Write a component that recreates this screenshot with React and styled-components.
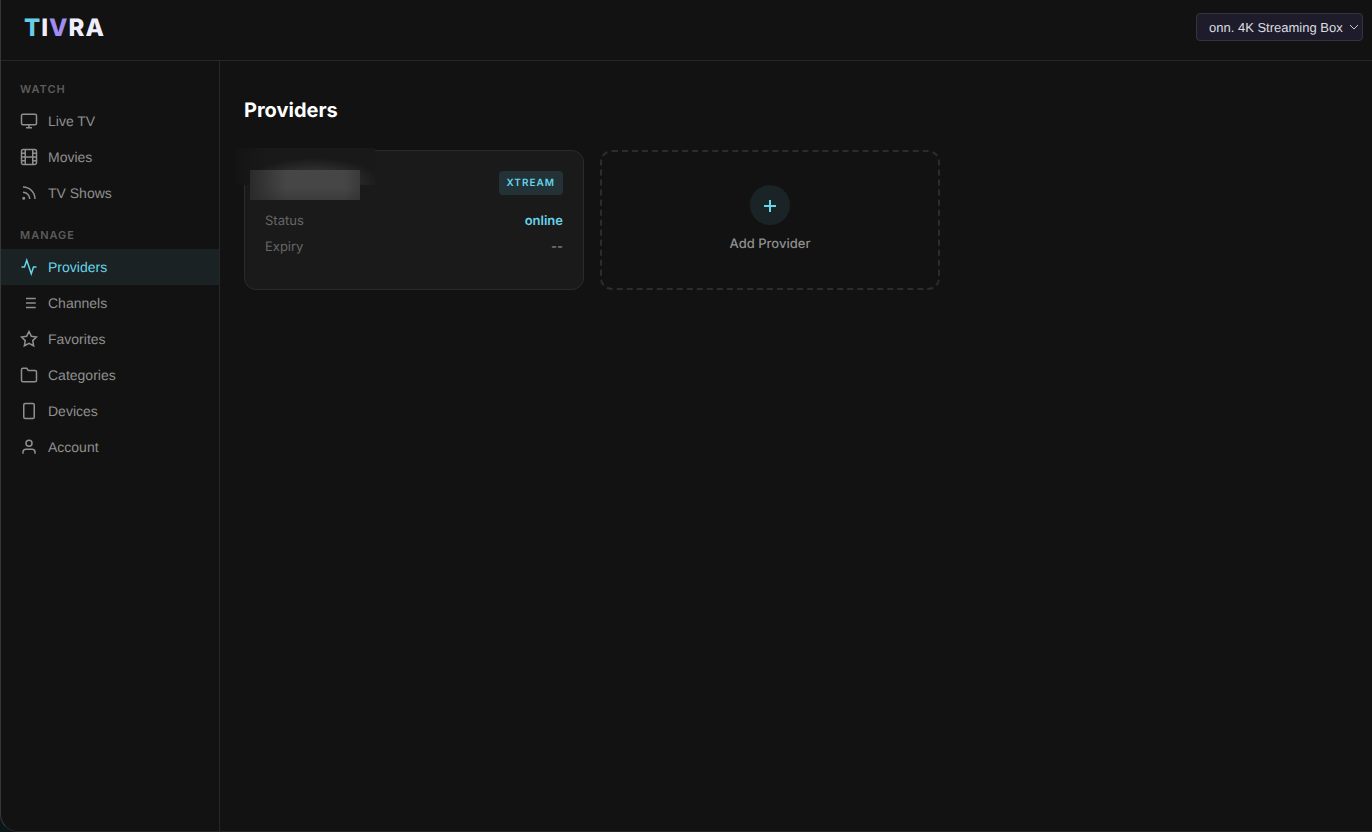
import React from "react";
import styled, { createGlobalStyle } from "styled-components";

const GlobalStyle = createGlobalStyle`
  * {
    box-sizing: border-box;
  }

  body {
    margin: 0;
    background: #0b1618;
    color: #999;
    font-family: "Liberation Sans", Arial, sans-serif;
    font-size: 14px;
    text-rendering: geometricPrecision;
  }
`;

const ICONS = {
  live: (
    <>
      <rect x="2" y="3" width="20" height="14" rx="2" />
      <path d="M8 21h8M12 17v4" />
    </>
  ),
  movies: (
    <>
      <rect x="2" y="2" width="20" height="20" rx="2.2" />
      <path d="M7 2v20M17 2v20M2 12h20M2 7h5M2 17h5M17 17h5M17 7h5" />
    </>
  ),
  shows: (
    <>
      <path d="M4 11a9 9 0 0 1 9 9M4 4a16 16 0 0 1 16 16" />
      <circle cx="5" cy="19" r="1" />
    </>
  ),
  providers: <path d="M22 12h-4l-3 9L9 3l-3 9H2" />,
  channels: <path d="M8 6h13M8 12h13M8 18h13" />,
  favorites: (
    <path d="M12 2l3.09 6.26L22 9.27l-5 4.87 1.18 6.88L12 17.77l-6.18 3.25L7 14.14 2 9.27l6.91-1.01z" />
  ),
  categories: (
    <path d="M22 19a2 2 0 0 1-2 2H4a2 2 0 0 1-2-2V5a2 2 0 0 1 2-2h5l2 3h9a2 2 0 0 1 2 2z" />
  ),
  devices: <rect x="5" y="2" width="14" height="20" rx="2" />,
  account: (
    <>
      <path d="M20 21v-2a4 4 0 0 0-4-4H8a4 4 0 0 0-4 4v2" />
      <circle cx="12" cy="7" r="4" />
    </>
  ),
};

const SECTIONS = [
  {
    title: "Watch",
    items: [
      { icon: "live", label: "Live TV" },
      { icon: "movies", label: "Movies" },
      { icon: "shows", label: "TV Shows" },
    ],
  },
  {
    title: "Manage",
    items: [
      { icon: "providers", label: "Providers", active: true },
      { icon: "channels", label: "Channels" },
      { icon: "favorites", label: "Favorites" },
      { icon: "categories", label: "Categories" },
      { icon: "devices", label: "Devices" },
      { icon: "account", label: "Account" },
    ],
  },
];

function Icon({ name }) {
  return (
    <NavIcon viewBox="0 0 24 24" aria-hidden="true">
      {ICONS[name]}
    </NavIcon>
  );
}

function Header() {
  return (
    <TopBar>
      <Logo href="#home">
        <Letter $color="#67cfe8">T</Letter>I<Letter $color="#a18cf0">V</Letter>RA
      </Logo>
      <DevicePicker>
        <DeviceSelect aria-label="Device" defaultValue="onn">
          <option value="onn">onn. 4K Streaming Box</option>
        </DeviceSelect>
        <Chevron viewBox="0 0 10 6" aria-hidden="true">
          <path d="M1 1l4 4 4-4" />
        </Chevron>
      </DevicePicker>
    </TopBar>
  );
}

function Sidebar() {
  return (
    <Side>
      {SECTIONS.map((section) => (
        <Section key={section.title}>
          <SectionTitle>{section.title}</SectionTitle>
          {section.items.map((item) => (
            <NavLink
              key={item.label}
              href={`#${item.icon}`}
              $active={item.active}
              aria-current={item.active ? "page" : undefined}
            >
              <Icon name={item.icon} />
              {item.label}
            </NavLink>
          ))}
        </Section>
      ))}
    </Side>
  );
}

function ProviderCard() {
  return (
    <Card>
      <HiddenHalo />
      <HiddenName />
      <CardHead>
        <Badge>XTREAM</Badge>
      </CardHead>
      <Details>
        <Row>
          <dt>Status</dt>
          <Value $online>online</Value>
        </Row>
        <Row>
          <dt>Expiry</dt>
          <Value>--</Value>
        </Row>
      </Details>
    </Card>
  );
}

export default function App() {
  return (
    <Shell>
      <GlobalStyle />
      <Header />
      <Body>
        <Sidebar />
        <Main>
          <Title>Providers</Title>
          <Grid>
            <ProviderCard />
            <AddCard type="button">
              <PlusCircle>
                <svg viewBox="0 0 12 12" width="12" height="12" aria-hidden="true">
                  <path d="M6 0v12M0 6h12" stroke="currentColor" strokeWidth="2" />
                </svg>
              </PlusCircle>
              Add Provider
            </AddCard>
          </Grid>
        </Main>
      </Body>
    </Shell>
  );
}

const Shell = styled.div`
  display: flex;
  flex-direction: column;
  min-height: 100vh;
  background: #121212;
  border-left: 1px solid #343838;
  border-bottom: 1px solid #242626;
  border-bottom-left-radius: 18px;
`;

const TopBar = styled.header`
  display: flex;
  align-items: flex-start;
  justify-content: space-between;
  height: 61px;
  padding: 13px 9px 0 23px;
  border-bottom: 1px solid #272727;
`;

const Logo = styled.a`
  color: #f0eefc;
  font-family: Inter, sans-serif;
  font-size: 24px;
  font-weight: 800;
  line-height: 30px;
  letter-spacing: 1px;
  text-decoration: none;
`;

const Letter = styled.span`
  color: ${(props) => props.$color};
`;

const DevicePicker = styled.div`
  display: grid;
  align-items: center;
`;

const DeviceSelect = styled.select`
  grid-area: 1 / 1;
  appearance: none;
  width: 167px;
  height: 28px;
  padding: 0 12px;
  color: #dcdce0;
  background: #1e1c2b;
  border: 1px solid #35343d;
  border-radius: 4px;
  font-family: "Liberation Sans", Arial, sans-serif;
  font-size: 13px;
  text-rendering: geometricPrecision;
`;

const Chevron = styled.svg`
  grid-area: 1 / 1;
  justify-self: end;
  width: 10px;
  height: 6px;
  margin-right: 4px;
  fill: none;
  stroke: #c8c8cc;
  pointer-events: none;
`;

const Body = styled.div`
  display: flex;
  flex: 1;
`;

const Side = styled.nav`
  flex: none;
  width: 219px;
  padding-top: 20px;
  border-right: 1px solid #272727;
`;

const Section = styled.section`
  margin-bottom: 16px;
`;

const SectionTitle = styled.h2`
  margin: 0;
  padding: 0 19px 6px;
  color: #5c5c5c;
  font-family: Inter, sans-serif;
  font-size: 11px;
  font-weight: 600;
  line-height: 16px;
  letter-spacing: 1px;
  text-transform: uppercase;
`;

const NavLink = styled.a`
  display: flex;
  align-items: center;
  gap: 10px;
  height: 36px;
  padding: 0 19px;
  color: ${(props) => (props.$active ? "#67d5ea" : "#8f8f8f")};
  background: ${(props) => (props.$active ? "#1a2223" : "transparent")};
  text-decoration: none;
`;

const NavIcon = styled.svg`
  width: 18px;
  height: 18px;
  fill: none;
  stroke: currentColor;
  stroke-width: 2;
`;

const Main = styled.main`
  flex: 1;
  padding: 35px 24px 24px;
`;

const Title = styled.h1`
  margin: 0 0 26px;
  color: #fff;
  font-family: Inter, sans-serif;
  font-size: 20px;
  font-weight: 700;
  line-height: 28px;
`;

const Grid = styled.div`
  display: grid;
  grid-template-columns: repeat(auto-fill, 340px);
  gap: 16px;
`;

const Card = styled.article`
  position: relative;
  min-height: 140px;
  padding: 20px;
  background: #1a1a1a;
  border: 1px solid #2b2b2b;
  border-radius: 12px;
`;

/* the provider name is masked with two overlapping blurred patches */
const HiddenHalo = styled.div`
  position: absolute;
  top: -3px;
  left: -9px;
  width: 139px;
  height: 37px;
  background:
    radial-gradient(ellipse 66px 24px at 78px 34px, #444, #4440),
    linear-gradient(90deg, #141414, #191919 30px);
`;

const HiddenName = styled.div`
  position: absolute;
  top: 19px;
  left: 5px;
  width: 110px;
  height: 30px;
  background:
    linear-gradient(180deg, #2a2a2a00 60%, #2a2a2a60),
    linear-gradient(90deg, #2a2a2a, #464646 36px, #464646 94px, #3a3a3a);
`;

const CardHead = styled.div`
  display: flex;
  justify-content: flex-end;
  margin-bottom: 16px;
`;

const Badge = styled.span`
  padding: 4px 8px;
  color: #67d5ea;
  background: #223237;
  border-radius: 4px;
  font-family: Inter, sans-serif;
  font-size: 10px;
  font-weight: 600;
  line-height: 16px;
  letter-spacing: 1px;
`;

const Details = styled.dl`
  display: grid;
  gap: 6px;
  margin: 0;
`;

const Row = styled.div`
  display: flex;
  justify-content: space-between;
  color: #666;
  font-family: Inter, sans-serif;
  font-size: 13px;
  line-height: 20px;
`;

const Value = styled.dd`
  margin: 0;
  color: ${(props) => (props.$online ? "#67d5ea" : "#999")};
  font-weight: ${(props) => (props.$online ? 600 : 400)};
`;

const AddCard = styled.button`
  display: flex;
  flex-direction: column;
  align-items: center;
  justify-content: center;
  gap: 8px;
  padding: 0;
  color: #8f8f8f;
  background: transparent;
  border: 2px dashed #2c2c2c;
  border-radius: 12px;
  font-family: Inter, sans-serif;
  font-size: 13px;
  font-weight: 500;
  line-height: 22px;
  text-rendering: geometricPrecision;
`;

const PlusCircle = styled.span`
  display: grid;
  place-items: center;
  width: 40px;
  height: 40px;
  padding-top: 2px;
  color: #67d5ea;
  background: #1a2426;
  border-radius: 50%;
`;
